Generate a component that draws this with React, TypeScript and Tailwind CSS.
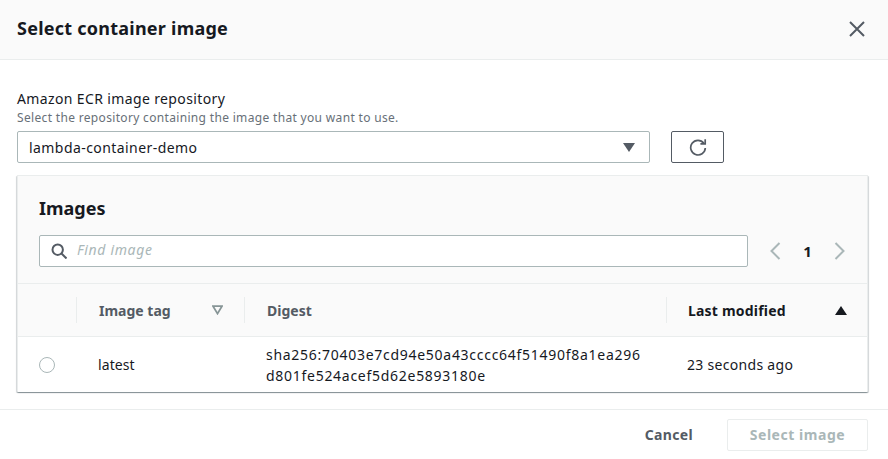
import React from "react";

function Divider() {
  return <span className="h-[26px] w-px bg-[#eaeded] shrink-0" />;
}

export default function App() {
  return (
    <div className="w-[888px] h-[459px] overflow-hidden bg-white flex flex-col font-['Noto_Sans',sans-serif] text-[#16191f]">
      <header className="h-[60px] shrink-0 bg-[#fafafa] border-b border-[#eaeded] flex justify-between pl-[17px] pr-[23px] pt-[17px]">
        <h1 className="text-[18px] leading-[22px] font-bold tracking-[0.24px]">Select container image</h1>
        <svg className="mt-[4px]" width="16" height="16" viewBox="0 0 16 16" fill="none" stroke="#545b64" strokeWidth="2">
          <path d="M1 1l14 14M15 1L1 15" />
        </svg>
      </header>

      <main className="flex-1 pl-[17px] pr-[20px] pt-[29px] flex flex-col">
        <label className="text-[14px] leading-[19px] tracking-[0.37px]">Amazon ECR image repository</label>
        <p className="text-[12px] leading-[16px] text-[#687078] mt-[2px] tracking-[0.33px]">Select the repository containing the image that you want to use.</p>
        <div className="flex mt-[5px] gap-[21px]">
          <div className="w-[633px] h-[32px] border border-[#aab7b8] rounded-[2px] flex items-center justify-between pl-[11px] pr-[14px] text-[14px] tracking-[0.43px]">
            <span>lambda-container-demo</span>
            <svg width="12" height="9" viewBox="0 0 12 9" fill="#545b64"><path d="M0 0h12L6 9z" /></svg>
          </div>
          <button className="w-[53px] h-[32px] border border-[#545b64] rounded-[2px] flex items-center justify-center">
            <svg width="18" height="18" viewBox="0 0 18 18" fill="none" stroke="#545b64" strokeWidth="1.7">
              <path d="M14.8 5.2A7.3 7.3 0 1 0 16.3 10" />
              <path d="M16.2 1.2v4.6h-4.8" />
            </svg>
          </button>
        </div>

        <section className="mt-[12px] w-[851px] h-[217px] bg-white rounded-[1px] border border-[#eaeded] border-b-0 shadow-[0_1px_1px_0_rgba(0,28,36,0.3),1px_1px_1px_0_rgba(0,28,36,0.15),-1px_1px_1px_0_rgba(0,28,36,0.15)] flex flex-col">
          <div className="bg-[#fafafa] h-[108px] border-b border-[#eaeded] shrink-0 pl-[21px] pr-[20px] pt-[20px]">
            <h2 className="text-[18px] leading-[24px] font-bold">Images</h2>
            <div className="flex items-center mt-[15px]">
              <div className="w-[709px] h-[32px] bg-white border border-[#aab7b8] rounded-[2px] flex items-center pl-[11px]">
                <svg width="16" height="16" viewBox="0 0 16 16" fill="none" stroke="#545b64" strokeWidth="2">
                  <circle cx="6.7" cy="6.7" r="5.2" />
                  <path d="M10.5 10.5l5 5" />
                </svg>
                <span className="ml-[10px] text-[14px] leading-[20px] italic text-[#aab7b8] tracking-[0.65px] -translate-y-px">Find image</span>
              </div>
              <div className="flex items-center ml-[21px]">
                <svg width="12" height="18" viewBox="0 0 12 18" fill="none" stroke="#aab7b8" strokeWidth="2"><path d="M10.5 1L2.5 9l8 8" /></svg>
                <span className="w-[53px] text-center text-[15px] font-bold">1</span>
                <svg width="12" height="18" viewBox="0 0 12 18" fill="none" stroke="#aab7b8" strokeWidth="2"><path d="M1.5 1l8 8-8 8" /></svg>
              </div>
            </div>
          </div>

          <div className="bg-[#fafafa] h-[53px] shrink-0 border-b border-[#eaeded] flex items-center text-[14px] font-bold">
            <div className="w-[59px] flex justify-end"><Divider /></div>
            <div className="w-[167px] flex items-center justify-between pl-[22px] pr-[21px] text-[#545b64]">
              <span>Image tag</span>
              <svg width="11" height="10" viewBox="0 0 11 10" fill="none" stroke="#879596" strokeWidth="1.8"><path d="M1 1.2h9L5.5 8.6z" /></svg>
            </div>
            <Divider />
            <div className="w-[421px] pl-[22px] text-[#545b64]">Digest</div>
            <Divider />
            <div className="flex-1 flex items-center justify-between pl-[21px] pr-[20px] tracking-[0.2px]">
              <span>Last modified</span>
              <svg width="12" height="9" viewBox="0 0 12 9" fill="#16191f"><path d="M6 0l6 9H0z" /></svg>
            </div>
          </div>

          <div className="flex-1 flex items-center text-[14px] leading-[21px]">
            <div className="w-[59px] flex pl-[21px]">
              <span className="w-[16px] h-[16px] rounded-full border border-[#aab7b8] bg-white" />
            </div>
            <div className="w-[169px] pl-[21px] tracking-[0.1px]">latest</div>
            <div className="w-[420px] pl-[20px]">
              <div className="w-[378px] break-all tracking-[0.72px]">sha256:70403e7cd94e50a43cccc64f51490f8a1ea296d801fe524acef5d62e5893180e</div>
            </div>
            <div className="flex-1 pl-[21px] tracking-[0.3px]">23 seconds ago</div>
          </div>
        </section>
      </main>

      <footer className="h-[50px] shrink-0 border-t border-[#eaeded] flex items-center justify-end pr-[20px] text-[14px] font-bold">
        <span className="text-[#545b64] mr-[34px] tracking-[0.35px]">Cancel</span>
        <button className="w-[141px] h-[32px] border border-[#eaeded] rounded-[2px] text-[#aab7b8] font-bold tracking-[0.55px]">Select image</button>
      </footer>
    </div>
  );
}
